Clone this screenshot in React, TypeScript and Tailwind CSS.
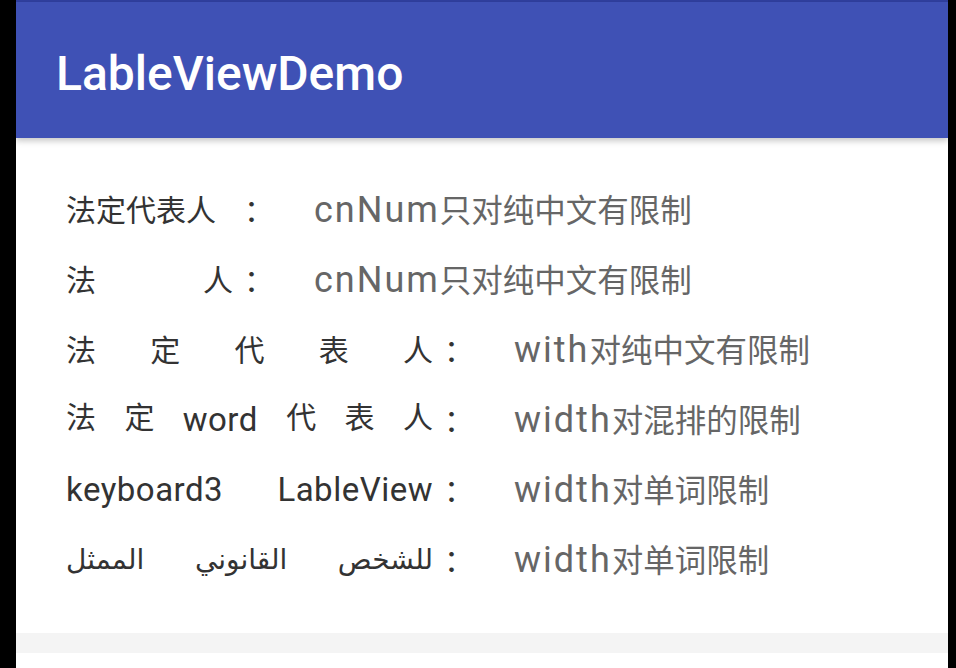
import React from "react";

const App: React.FC = () => {
  return (
    <div className="flex h-[668px] w-[956px] bg-black font-['Roboto','Noto_Sans_CJK_SC',sans-serif]">
      <div className="ml-4 flex w-[932px] flex-col bg-white">
        <div className="h-[2px] bg-[#303f9f]" />
        <header className="relative z-10 flex h-[136px] items-center bg-[#3f51b5] pl-10 pt-2 shadow-[0_3px_6px_rgba(0,0,0,0.22)]">
          <h1 className="text-[48px] font-medium text-white">LableViewDemo</h1>
        </header>

        <main className="flex flex-1 flex-col pl-[50px] pt-[37px]">
          {/* row 1: natural spacing */}
          <div className="flex h-[70px] items-center">
            <div className="flex w-[167px] text-[30px] text-[#333]">
              <span>法定代表人</span>
            </div>
            <span className="ml-[11px] w-[30px] text-[30px] text-[#333]">：</span>
            <span className="ml-[40px] text-[31.5px] text-[#666]">
              <span className="text-[36px] tracking-[2px]">cnNum</span>只对纯中文有限制
            </span>
          </div>

          {/* row 2 */}
          <div className="flex h-[70px] items-center">
            <div className="flex w-[167px] justify-between text-[30px] text-[#333]">
              <span>法</span>
              <span>人</span>
            </div>
            <span className="ml-[11px] w-[30px] text-[30px] text-[#333]">：</span>
            <span className="ml-[40px] text-[31.5px] text-[#666]">
              <span className="text-[36px] tracking-[2px]">cnNum</span>只对纯中文有限制
            </span>
          </div>

          {/* row 3 */}
          <div className="flex h-[70px] items-center">
            <div className="flex w-[367px] justify-between text-[30px] text-[#333]">
              <span>法</span>
              <span>定</span>
              <span>代</span>
              <span>表</span>
              <span>人</span>
            </div>
            <span className="ml-[11px] w-[30px] text-[30px] text-[#333]">：</span>
            <span className="ml-[40px] text-[31.5px] text-[#666]">
              <span className="text-[36px] tracking-[2px]">with</span>对纯中文有限制
            </span>
          </div>

          {/* row 4 */}
          <div className="flex h-[70px] items-center">
            <div className="flex w-[367px] justify-between text-[30px] text-[#333]">
              <span>法</span>
              <span>定</span>
              <span className="text-[33px] tracking-[0.5px]">word</span>
              <span>代</span>
              <span>表</span>
              <span>人</span>
            </div>
            <span className="ml-[11px] w-[30px] text-[30px] text-[#333]">：</span>
            <span className="ml-[40px] text-[31.5px] text-[#666]">
              <span className="text-[36px] tracking-[2px]">width</span>对混排的限制
            </span>
          </div>

          {/* row 5 */}
          <div className="flex h-[70px] items-center">
            <div className="flex w-[367px] justify-between text-[33px] tracking-[0.5px] text-[#333]">
              <span>keyboard3</span>
              <span>LableView</span>
            </div>
            <span className="ml-[11px] w-[30px] text-[30px] text-[#333]">：</span>
            <span className="ml-[40px] text-[31.5px] text-[#666]">
              <span className="text-[36px] tracking-[2px]">width</span>对单词限制
            </span>
          </div>

          {/* row 6: arabic words laid out left to right */}
          <div className="flex h-[70px] items-center">
            <div className="flex w-[367px] justify-between font-['DejaVu_Sans',sans-serif] text-[28px] text-[#333]">
              <span dir="rtl">الممثل</span>
              <span dir="rtl">القانوني</span>
              <span dir="rtl">للشخص</span>
            </div>
            <span className="ml-[11px] w-[30px] text-[30px] text-[#333]">：</span>
            <span className="ml-[40px] text-[31.5px] text-[#666]">
              <span className="text-[36px] tracking-[2px]">width</span>对单词限制
            </span>
          </div>
        </main>

        <div className="h-5 bg-[#f4f4f4]" />
        <div className="h-[15px] bg-white" />
      </div>
      <div className="w-2 bg-black" />
    </div>
  );
};

export default App;
